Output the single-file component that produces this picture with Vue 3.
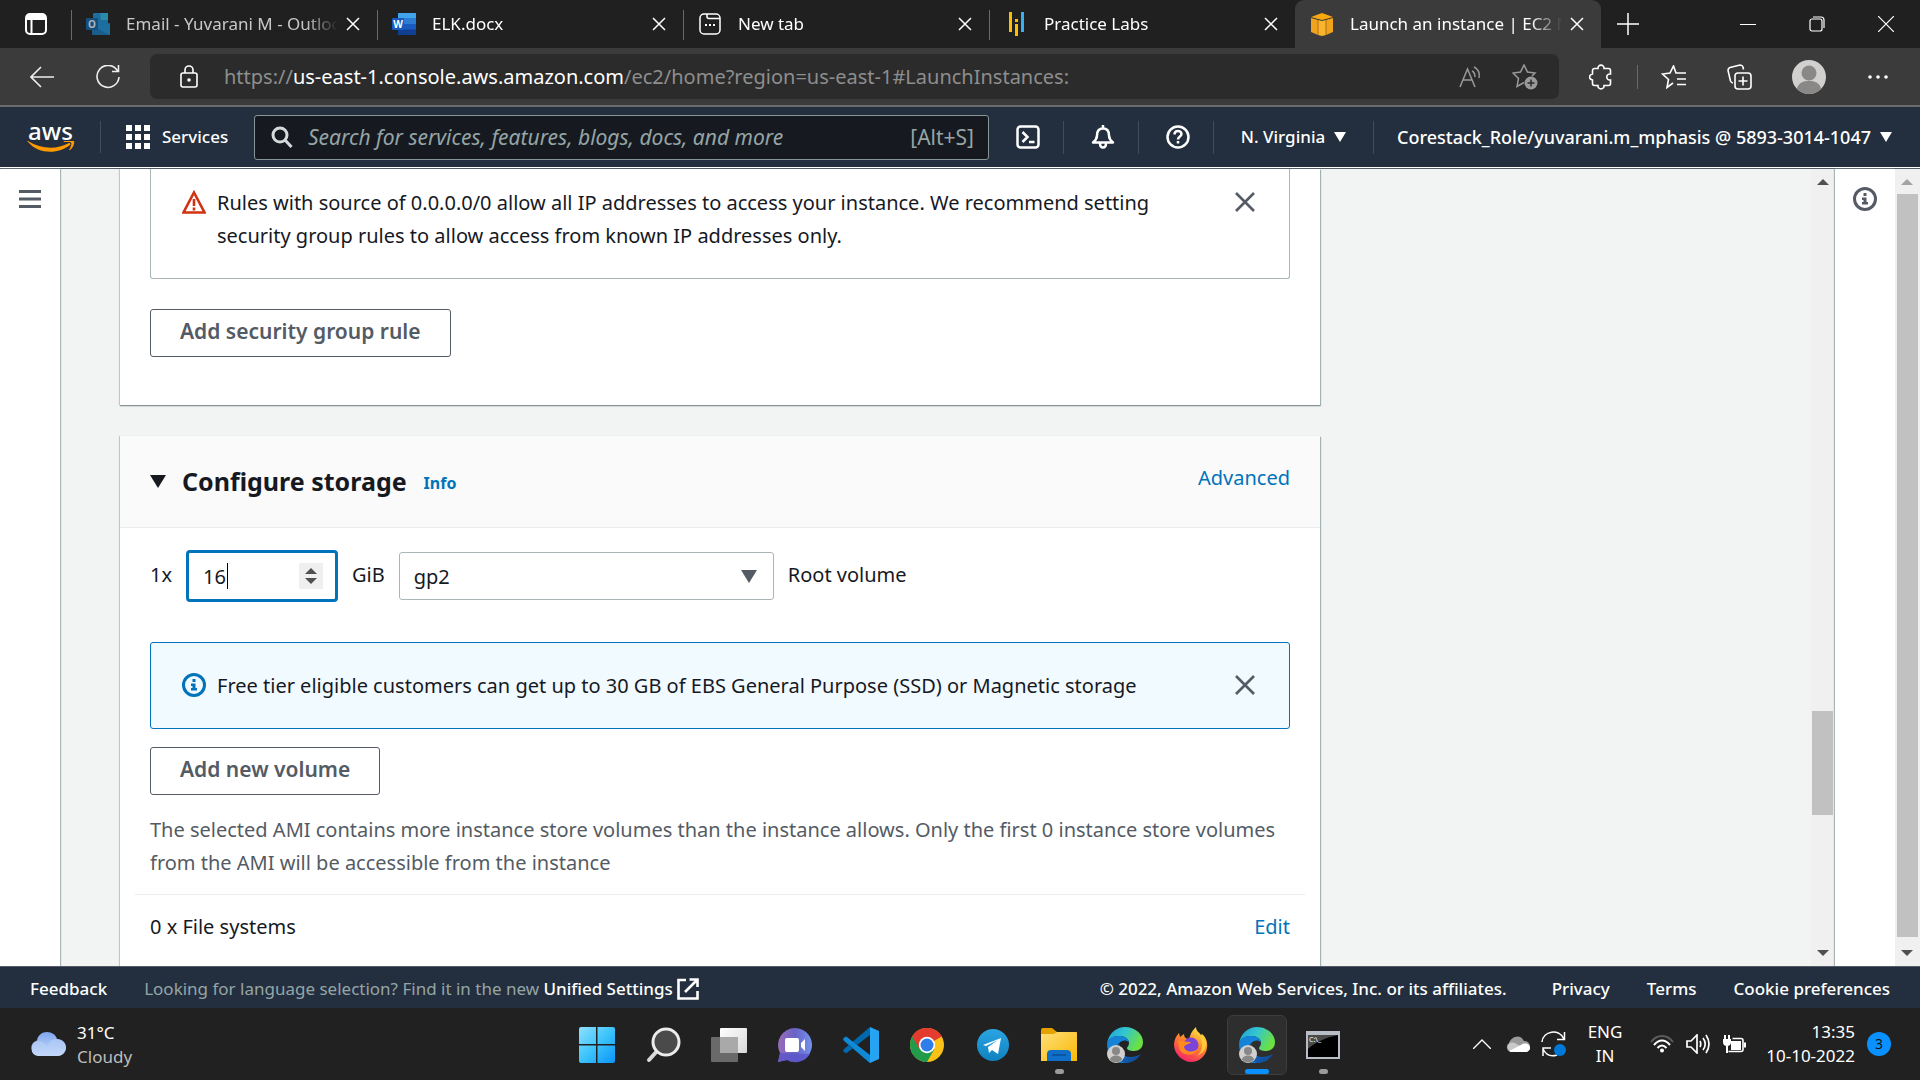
<script setup>
import { ref } from 'vue'

const tabs = [
  { icon: 'outlook', title: 'Email - Yuvarani M - Outlook', dim: true },
  { icon: 'word', title: 'ELK.docx' },
  { icon: 'page', title: 'New tab' },
  { icon: 'labs', title: 'Practice Labs' },
  { icon: 'cube', title: 'Launch an instance | EC2 Management', active: true }
]

const size = ref(16)
const volumeType = ref('gp2')
const search = ref('')
</script>

<template>
  <div class="screen">
    <svg class="defs" width="0" height="0" aria-hidden="true">
      <defs>
        <linearGradient id="win" x1="0" y1="0" x2="1" y2="1"><stop offset="0" stop-color="#8fe0ff" /><stop offset=".5" stop-color="#3cc4fb" /><stop offset="1" stop-color="#0a94fa" /></linearGradient>
        <linearGradient id="cloud" x1="0" y1="0" x2="0" y2="1"><stop offset="0" stop-color="#7ea6ee" /><stop offset="1" stop-color="#cfe0fb" /></linearGradient>
        <linearGradient id="chat" x1="0" y1="0" x2="1" y2="0"><stop offset="0" stop-color="#9a6bb8" /><stop offset=".5" stop-color="#6a62c6" /><stop offset="1" stop-color="#7493ee" /></linearGradient>
        <linearGradient id="tele" x1="0" y1="0" x2="0" y2="1"><stop offset="0" stop-color="#2ba5e2" /><stop offset="1" stop-color="#0f82bf" /></linearGradient>
        <linearGradient id="fold" x1="0" y1="0" x2="1" y2="1"><stop offset="0" stop-color="#ffe07a" /><stop offset="1" stop-color="#fab803" /></linearGradient>
        <linearGradient id="edgeTop" x1="0" y1="0" x2="1" y2=".4"><stop offset="0" stop-color="#1a9fdc" /><stop offset=".5" stop-color="#33c6cf" /><stop offset="1" stop-color="#6be044" /></linearGradient>
        <linearGradient id="edgeLow" x1="0" y1="0" x2="1" y2="1"><stop offset="0" stop-color="#0f7fd6" /><stop offset="1" stop-color="#123f8c" /></linearGradient>
        <linearGradient id="fire" x1=".8" y1="0" x2=".3" y2="1"><stop offset="0" stop-color="#fff04a" /><stop offset=".45" stop-color="#ff8a2a" /><stop offset="1" stop-color="#f5206a" /></linearGradient>
        <linearGradient id="pane" x1="0" y1="0" x2="1" y2="1"><stop offset="0" stop-color="#ffffff" /><stop offset="1" stop-color="#d8d8d8" /></linearGradient>
      </defs>
    </svg>

    <header class="tabbar">
      <button class="tab-actions" aria-label="Tab actions menu">
        <svg width="22" height="22" viewBox="0 0 22 22"><rect x="1" y="1" width="20" height="20" rx="4" fill="none" stroke="#fff" stroke-width="2" /><path d="M1 7V4a3 3 0 0 1 3-3h14a3 3 0 0 1 3 3v3z" fill="#fff" /><path d="M6.500 7v14" stroke="#fff" stroke-width="2" /></svg>
      </button>
      <div v-for="t in tabs" :key="t.title" class="tab" :class="{ active: t.active, dim: t.dim }">
        <svg v-if="t.icon === 'outlook'" class="fav" viewBox="0 0 24 24"><rect x="7" y="1" width="15" height="15" rx="1" fill="#1b6f9f" /><path d="M14.500 1H22v7h-7.500z" fill="#2b8aa8" /><path d="M6 11l9 6 9-6v11a1 1 0 0 1-1 1H7a1 1 0 0 1-1-1z" fill="#1a5c8c" /><path d="M24 11v11a1 1 0 0 1-1 1L9 15z" fill="#1c6f9e" /><rect y="6" width="12" height="12" rx="1" fill="#164f7d" /><text x="6" y="15.500" text-anchor="middle" font-size="10" font-weight="700" fill="#a9b6c2">O</text></svg>
        <svg v-else-if="t.icon === 'word'" class="fav" viewBox="0 0 24 24"><rect x="6" y="1" width="18" height="22" rx="1" fill="#2b7cd3" /><path d="M6 6V2a1 1 0 0 1 1-1h16a1 1 0 0 1 1 1v4z" fill="#41a5ee" /><path d="M6 12h18v6H6z" fill="#185abd" /><path d="M6 17.500h18V22a1 1 0 0 1-1 1H7a1 1 0 0 1-1-1z" fill="#103f91" /><rect y="6" width="12" height="12" rx="1" fill="#185abd" /><text x="6" y="15.500" text-anchor="middle" font-size="10" font-weight="700" fill="#fff">W</text></svg>
        <svg v-else-if="t.icon === 'page'" class="fav" viewBox="0 0 24 24" fill="none" stroke="#fff" stroke-width="1.500"><rect x="2" y="2" width="20" height="20" rx="4" /><path d="M9 2v2.500a2 2 0 0 0 2 2h11" /><path d="M7 13h2M11 13h2M15 13h2" stroke-width="2" /></svg>
        <svg v-else-if="t.icon === 'labs'" class="fav" viewBox="0 0 24 24"><path d="M5 0h3v20H5zM11 15h3v9h-3zM11 7h3v3h-3zM11 12h3v3h-3z" fill="#fbbc04" /><path d="M17 0h3v20h-3z" fill="#35b0f0" /></svg>
        <svg v-else class="fav" viewBox="0 0 24 24"><path d="M1 5l11-4 11 4-11 3z" fill="#f9a90f" /><path d="M1 6l7 2v15l-7-3zM23 6l-7 2v15l7-3z" fill="#f0a31c" /><path d="M8 8l4 1 4-1v15l-4 1-4-1z" fill="#fbb42c" /><path d="M8 8v15M16 8v15" stroke="#a8701a" /></svg>
        <span class="tab-title">{{ t.title }}</span>
        <button class="tab-close" aria-label="Close tab"><svg width="14" height="14" viewBox="0 0 14 14" stroke="#fff" stroke-width="1.500"><path d="M1 1l12 12M13 1L1 13" /></svg></button>
      </div>
      <button class="new-tab" aria-label="New tab"><svg width="22" height="22" viewBox="0 0 22 22" stroke="#fff" stroke-width="1.500"><path d="M11 0v22M0 11h22" /></svg></button>
      <div class="window-buttons">
        <button aria-label="Minimize"><svg width="16" height="16" viewBox="0 0 16 16" stroke="#fff"><path d="M0 8.500h16" /></svg></button>
        <button aria-label="Restore"><svg width="16" height="16" viewBox="0 0 16 16" stroke="#fff" fill="none" stroke-width="1.200"><rect x="1" y="3" width="12" height="12" rx="2" /><path d="M4 1h8a3 3 0 0 1 3 3v8" /></svg></button>
        <button aria-label="Close"><svg width="16" height="16" viewBox="0 0 16 16" stroke="#fff" stroke-width="1.200"><path d="M0 0l16 16M16 0L0 16" /></svg></button>
      </div>
    </header>

    <div class="toolbar">
      <button aria-label="Back"><svg width="24" height="22" viewBox="0 0 24 22" fill="none" stroke="#eee" stroke-width="1.600"><path d="M24 11H1M11 1L1 11l10 10" /></svg></button>
      <button aria-label="Refresh"><svg width="24" height="24" viewBox="0 0 24 24" fill="none" stroke="#eee" stroke-width="1.600"><path d="M21.500 5.800A11 11 0 1 0 23 12M22.500 0v6.500H16" /></svg></button>
      <div class="address">
        <svg width="18" height="24" viewBox="0 0 18 24" fill="none" stroke="#fff" stroke-width="1.600"><rect x="1" y="8" width="16" height="14" rx="2" /><path d="M5 8V5a4 4 0 0 1 8 0v3" /><circle cx="9" cy="15" r="1" fill="#fff" /></svg>
        <div class="url" role="textbox" tabindex="0" aria-label="Address">https://<b>us-east-1.console.aws.amazon.com</b>/ec2/home?region=us-east-1#LaunchInstances:</div>
        <button class="read" aria-label="Read aloud"><svg width="24" height="24" viewBox="0 0 24 24" fill="none" stroke="#9a9a9a" stroke-width="1.500"><path d="M1 22L8.500 4 16 22M4 15h9M13 6c2 1 3 3 3 6M15 2c4 2 6 6 5 11" /></svg></button>
        <button class="fav-add" aria-label="Add to favorites"><svg width="26" height="26" viewBox="0 0 26 26" fill="none" stroke="#9a9a9a" stroke-width="1.500"><path d="M12 18.500l-7 4 1.500-8L1 9l7.500-1L12 1l3.500 7 7.500 1-3 3" /><circle cx="19" cy="19" r="6.500" fill="#9a9a9a" stroke="none" /><path d="M19 15.500v7M15.500 19h7" stroke="#2b2b2b" /></svg></button>
      </div>
      <button class="ext" aria-label="Extensions"><svg width="24" height="26" viewBox="0 0 24 26" fill="none" stroke="#fff" stroke-width="1.600"><path d="M5.500 4.500H9c-.6-4.500 6.600-4.500 6 0h4.500a2 2 0 0 1 2 2V10c-5-.8-5 6.800 0 6v3.500a2 2 0 0 1-2 2H15c.6 4.500-6.600 4.500-6 0H5.500a2 2 0 0 1-2-2V16c-4-1-4-5 0-6V6.500a2 2 0 0 1 2-2z" /></svg></button>
      <span class="tool-sep"></span>
      <button aria-label="Favorites"><svg width="26" height="24" viewBox="0 0 26 24" fill="none" stroke="#fff" stroke-width="1.600"><path d="M12 18l-6 4.500 1.500-8L1.500 9l7.500-1L12.500 1 15 8h10M16 14h9M16 19.500h9" /></svg></button>
      <button aria-label="Collections"><svg width="26" height="26" viewBox="0 0 26 26" fill="none" stroke="#fff" stroke-width="1.600"><path d="M6 19c-1.500 0-2-1-2.500-2L1 6.500c0-1.500.5-2.500 2-3L13 1c1.500 0 2.500.5 3 2l.5 2.500" /><rect x="8" y="9" width="16" height="16" rx="3" /><path d="M16 12.500v9M11.500 17h9" /></svg></button>
      <button class="profile" aria-label="Profile"><svg width="34" height="34" viewBox="0 0 34 34"><circle cx="17" cy="17" r="17" fill="#d2d0ce" /><circle cx="17" cy="13" r="7.500" fill="#8a8886" /><path d="M5 29c1-11 23-11 24 0a17 17 0 0 1-24 0z" fill="#8a8886" /></svg></button>
      <button aria-label="Settings and more"><svg width="22" height="4" viewBox="0 0 22 4" fill="#fff"><circle cx="3" cy="2" r="1.800" /><circle cx="11" cy="2" r="1.800" /><circle cx="19" cy="2" r="1.800" /></svg></button>
    </div>

    <nav class="aws-nav">
      <a href="#" class="logo" aria-label="AWS home"><span>aws</span><svg width="48" height="12" viewBox="0 0 48 12" fill="#ff9900"><path d="M1 0c13 8 28 9 41 2 1 0 2 1 1 2C32 13 12 14 1 1 0 0 0 0 1 0z" /><path d="M37 0c4-1.500 9-1.500 10 0s-1 7-4 9c-1 .5-1 0-.7-.6C44 5 45 2.500 44 1.600c-1-.8-4-.6-6.500-.5-1 0-1.200-.7-.5-1.100z" /></svg></a>
      <button class="services"><svg width="24" height="24" viewBox="0 0 24 24" fill="#fff"><path d="M0 0h6v6H0zM9 0h6v6H9zM18 0h6v6h-6zM0 9h6v6H0zM9 9h6v6H9zM18 9h6v6h-6zM0 18h6v6H0zM9 18h6v6H9zM18 18h6v6h-6z" /></svg>Services</button>
      <label class="search">
        <svg width="22" height="22" viewBox="0 0 22 22" fill="none" stroke="#d5dbdb" stroke-width="3"><circle cx="9" cy="9" r="7" /><path d="M14 14l6.500 7" /></svg>
        <input v-model="search" type="search" aria-label="Search" placeholder="Search for services, features, blogs, docs, and more" />
        <kbd>[Alt+S]</kbd>
      </label>
      <button class="nav-icon" aria-label="CloudShell"><svg width="24" height="24" viewBox="0 0 24 24" fill="none" stroke="#fff" stroke-width="2.500"><rect x="1.500" y="1.500" width="21" height="21" rx="3" /><path d="M6.500 7l5 5-5 5M13 17h5.500" /></svg></button>
      <button class="nav-icon" aria-label="Notifications"><svg width="24" height="24" viewBox="0 0 24 24" fill="none" stroke="#fff" stroke-width="2.500" stroke-linejoin="round"><path d="M12 0v3M2 17.500c3-2.500 4-4 4-7C6 6 8 3.500 12 3.500s6 2.500 6 7c0 3 1 4.500 4 7zM9 18c0 6 6 6 6 0" /></svg></button>
      <button class="nav-icon" aria-label="Help"><svg width="24" height="24" viewBox="0 0 24 24" fill="none" stroke="#fff" stroke-width="2.500"><circle cx="12" cy="12" r="10.500" /><path d="M8.500 9.500c0-5 7-4.500 7-.5 0 2.500-3.500 2.500-3.500 5.500M12 16v2.500" /></svg></button>
      <button class="region">N. Virginia<i class="caret-down"></i></button>
      <button class="account">Corestack_Role/yuvarani.m_mphasis @ 5893-3014-1047<i class="caret-down"></i></button>
    </nav>

    <main class="main">
      <aside class="rail left"><button aria-label="Open navigation"><svg width="22" height="18" viewBox="0 0 22 18" fill="#545b64"><path d="M0 0h22v3H0zM0 7.500h22v3H0zM0 15h22v3H0z" /></svg></button></aside>

      <div class="scroll-area">
        <div class="content">
          <section class="card security">
            <div class="warning">
              <svg class="note-icon" width="24" height="24" viewBox="0 0 24 24"><path d="M12 2.500L22.500 22.500H1.500z" fill="none" stroke="#d13212" stroke-width="2.600" /><path d="M12 9v7M12 17.500v3" stroke="#d13212" stroke-width="2.600" /></svg>
              <p>Rules with source of 0.0.0.0/0 allow all IP addresses to access your instance. We recommend setting security group rules to allow access from known IP addresses only.</p>
              <button class="dismiss" aria-label="Dismiss"><svg width="20" height="20" viewBox="0 0 20 20" stroke="#545b64" stroke-width="2.600"><path d="M1 1l18 18M19 1L1 19" /></svg></button>
            </div>
            <button class="btn">Add security group rule</button>
          </section>

          <section class="card storage">
            <header class="card-head">
              <button class="toggle" aria-label="Collapse"><i class="caret-down big"></i></button>
              <h2>Configure storage</h2>
              <a href="#" class="info">Info</a>
              <a href="#" class="advanced">Advanced</a>
            </header>
            <div class="card-body">
              <div class="volume">
                <label for="size">1x</label>
                <div class="number">
                  <input id="size" v-model="size" type="number" />
                  <span class="text-caret"></span>
                  <span class="spin">
                    <button aria-label="Increase" @click="size++"><i class="tri up"></i></button>
                    <button aria-label="Decrease" @click="size--"><i class="tri"></i></button>
                  </span>
                </div>
                <label for="type">GiB</label>
                <div class="select">
                  <select id="type" v-model="volumeType"><option>gp2</option><option>gp3</option></select>
                  <i class="caret-down big grey"></i>
                </div>
                <span class="role">Root volume</span>
              </div>

              <div class="notice">
                <svg class="note-icon" width="24" height="24" viewBox="0 0 24 24"><circle cx="12" cy="12" r="10.500" fill="none" stroke="#0073bb" stroke-width="3" /><path d="M10.500 6h3v3h-3zM9 10.500h4.500V15H15v2.500H9V15h1.500v-2H9z" fill="#0073bb" /></svg>
                <p>Free tier eligible customers can get up to 30 GB of EBS General Purpose (SSD) or Magnetic storage</p>
                <button class="dismiss" aria-label="Dismiss"><svg width="20" height="20" viewBox="0 0 20 20" stroke="#545b64" stroke-width="2.600"><path d="M1 1l18 18M19 1L1 19" /></svg></button>
              </div>

              <button class="btn">Add new volume</button>
              <p class="hint">The selected AMI contains more instance store volumes than the instance allows. Only the first 0 instance store volumes from the AMI will be accessible from the instance</p>
              <div class="filesystems"><span>0 x File systems</span><a href="#">Edit</a></div>
            </div>
          </section>
        </div>
        <div class="scrollbar inner"><i class="tri up"></i><span class="track"><span class="thumb"></span></span><i class="tri"></i></div>
      </div>

      <aside class="rail right"><button aria-label="Info panel"><svg width="24" height="24" viewBox="0 0 24 24"><circle cx="12" cy="12" r="10.500" fill="none" stroke="#545b64" stroke-width="3" /><path d="M10.500 6h3v3h-3zM9 10.500h4.500V15H15v2.500H9V15h1.500v-2H9z" fill="#545b64" /></svg></button></aside>
      <div class="scrollbar outer"><i class="tri up off"></i><span class="track"><span class="thumb"></span></span><i class="tri"></i></div>
    </main>

    <footer class="footer">
      <a href="#" class="feedback">Feedback</a>
      <span class="lang">Looking for language selection? Find it in the new <a href="#">Unified Settings</a></span>
      <svg class="external" width="22" height="22" viewBox="0 0 22 22" fill="none" stroke="#fff" stroke-width="2.600"><path d="M9 2H1.500v18.500h19V13M12.500 1.500h8V9M20 2L8 14" /></svg>
      <span class="copyright">© 2022, Amazon Web Services, Inc. or its affiliates.</span>
      <a href="#">Privacy</a>
      <a href="#">Terms</a>
      <a href="#">Cookie preferences</a>
    </footer>

    <div class="taskbar">
      <button class="weather">
        <svg width="36" height="24" viewBox="0 0 36 24"><path d="M8 24a8 8 0 0 1-1-15.500C8 3 12 0 17 0s9 3 10 7c5 0 9 4 9 8.500S32 24 28 24z" fill="url(#cloud)" /><path d="M8 24a8 8 0 0 1 0-15c4 0 8 3 9 6 1-5 5-8 10-8 5 0 9 4 9 8.500S32 24 28 24z" fill="#b9d0f7" opacity=".6" /></svg>
        <span>31°C<br /><em>Cloudy</em></span>
      </button>

      <div class="apps">
        <button aria-label="Start"><svg width="36" height="36" viewBox="0 0 36 36" fill="url(#win)"><path d="M2 0H17V17H0V2a2 2 0 0 1 2-2zM18.500 0H34a2 2 0 0 1 2 2V17H18.500zM0 18.500H17V36H2a2 2 0 0 1-2-2zM18.500 18.500H36V34a2 2 0 0 1-2 2H18.500z" /></svg></button>
        <button aria-label="Search"><svg width="36" height="36" viewBox="0 0 36 36"><path d="M4 33l9-10" stroke="#d9d9d9" stroke-width="4" stroke-linecap="round" /><circle cx="21" cy="15" r="13" fill="#4a4a4a" stroke="#ececec" stroke-width="3" /></svg></button>
        <button aria-label="Task view"><svg width="36" height="36" viewBox="0 0 36 36"><rect x="9" y="1" width="27" height="25" rx="1" fill="url(#pane)" /><rect x="0" y="10" width="27" height="25" rx="1" fill="#6a6a6a" /><path d="M9 10h18v16H9z" fill="#a9a9a9" /></svg></button>
        <button aria-label="Chat"><svg width="36" height="36" viewBox="0 0 36 36"><path d="M18 1a17 17 0 1 1-8 32L1 35l2-9A17 17 0 0 1 18 1z" fill="url(#chat)" /><path d="M1 35l2-9 30 1A17 17 0 0 1 10 33z" fill="#5a55cc" opacity=".8" /><rect x="8" y="11" width="14" height="14" rx="2" fill="#fff" /><path d="M24 16l4-4v12l-4-4z" fill="#fff" /></svg></button>
        <button aria-label="Visual Studio Code"><svg width="36" height="36" viewBox="0 0 36 36"><path d="M0 12l3-2.500 24 19V36L1 14z" fill="#0d7fc7" /><path d="M0 24l3 2.500L27 8V0L1 22z" fill="#0069ae" /><path d="M0 12l3-2.500L27 28v8z" fill="#1089d6" /><path d="M27 0l9 4v28l-9 4z" fill="#27a3f3" /></svg></button>
        <button aria-label="Chrome"><svg width="34" height="34" viewBox="0 0 34 34"><circle cx="17" cy="17" r="17" fill="#fbc116" /><path d="M17 17L2.300 8.500A17 17 0 0 1 31.700 8.500z" fill="#e33b2e" /><path d="M2.300 8.500A17 17 0 0 0 17 34l7.500-13H17z" fill="#219a4c" /><path d="M17 9h14.900l-.2-.5A17 17 0 0 0 2.300 8.500L9 20z" fill="#e33b2e" /><circle cx="17" cy="17" r="8.200" fill="#fff" /><circle cx="17" cy="17" r="6.500" fill="#2f7de9" /></svg></button>
        <button aria-label="Telegram"><svg width="32" height="32" viewBox="0 0 32 32"><circle cx="16" cy="16" r="16" fill="url(#tele)" /><path d="M6 16l18-7-3 16-6-4-3 3-1-6 10-7-12 6z" fill="#fff" /></svg></button>
        <button class="open" aria-label="File Explorer"><svg width="36" height="34" viewBox="0 0 36 34"><path d="M0 2a2 2 0 0 1 2-2h9l5 4h18a2 2 0 0 1 2 2v8H0z" fill="#e5a100" /><path d="M0 6h13l3-2h19a1 1 0 0 1 1 1v28H0z" fill="url(#fold)" /><path d="M6 33V26a4 4 0 0 1 4-4h16a4 4 0 0 1 4 4v7z" fill="#0f6fc8" /><path d="M11 27h14" stroke="#0a4d92" stroke-width="1.500" /></svg></button>
        <button v-for="n in 2" :key="n" aria-label="Edge" :class="{ open: n === 2, current: n === 2 }">
          <svg width="36" height="36" viewBox="0 0 36 36"><path d="M0 17C1 7 9 0 18 0c10 0 18 7 18 15 0 6-4 9-9 9-4 0-7-1-7-3 0-1 2-2 2-5 0-4-4-7-10-7S1 12 0 17z" fill="url(#edgeTop)" /><path d="M0 17c1-6 6-8 12-8 5 0 9 2 10 6-5-4-12 0-12 7 0 7 6 13 12 14C8 38 0 29 0 17z" fill="#1583d8" /><path d="M13 17c-3 8 3 13 10 13 4 0 8-1 11-3-4 6-9 9-16 9C9 34 8 22 13 17z" fill="url(#edgeLow)" /><circle cx="9" cy="27" r="9" fill="#d2d0ce" /><circle cx="9" cy="24" r="4" fill="#8a8886" /><path d="M3 33c0-6 12-6 12 0a9 9 0 0 1-12 0z" fill="#8a8886" /></svg>
        </button>
        <button aria-label="Firefox" class="second"><svg width="36" height="36" viewBox="0 0 36 36"><path d="M1 18c0-5 2-9 5-12l1 4 4-3c0 3 2 5 5 5 2-6 3-8 7-12 0 4 3 5 5 8l1-1c4 3 6 9 5 14-1 8-8 14-16 14S1 27 1 18z" fill="url(#fire)" /><circle cx="18" cy="18" r="7.500" fill="#7a45d8" /><path d="M5 14c4-1 7 1 13 1-2 3-6 2-7 5 1 5 9 6 14 2-2 7-16 8-19-1z" fill="#ff8a1f" /><path d="M22 1c0 4 7 8 7 18 0 4-2 8-6 10 7-2 11-8 10-14 0-3-2-6-4-7l-1 1c-2-3-5-4-6-8z" fill="#ffc93a" /></svg></button>
        <button class="open third" aria-label="Command Prompt"><svg width="34" height="28" viewBox="0 0 34 28"><rect width="34" height="28" fill="#b9bec6" /><rect x="2" y="4" width="30" height="22" fill="#000" /><path d="M2 4h30C18 7 8 12 2 18z" fill="#4a4a4a" /><text x="3" y="11" font-size="7" fill="#fff">C:\_</text></svg></button>
      </div>

      <div class="tray">
        <button class="cell" aria-label="Show hidden icons"><svg width="18" height="10" viewBox="0 0 18 10" fill="none" stroke="#fff" stroke-width="1.400"><path d="M0 10l9-9 9 9" /></svg></button>
        <button class="cell" aria-label="OneDrive"><svg width="24" height="16" viewBox="0 0 24 16"><path d="M5 16a5 5 0 0 1-2-9C5 1 14-3 18 5c8 0 8 11 1 11z" fill="#9a9a9a" /><path d="M5 16a5 5 0 0 1-1-9c3-1 6 0 8 2l12 2c0 3-2 5-5 5z" fill="#c9c9c9" /><path d="M3 15l12-6c4-3 9-1 9 3 0 2-2 4-5 4H5z" fill="#fff" /></svg></button>
        <button class="cell" aria-label="Sync"><svg width="26" height="26" viewBox="0 0 26 26" fill="none" stroke="#fff" stroke-width="1.500"><path d="M1 11C2 0 18-3 23 8M23.500 1v7.500H16M2 25v-8h8M2 18c3 6 8 8 14 6" /><circle cx="19" cy="19" r="6" fill="#0078d7" stroke="none" /></svg></button>
        <button class="language">ENG<br />IN</button>
        <button class="cell" aria-label="Wi-Fi"><svg width="24" height="18" viewBox="0 0 24 18" fill="none" stroke-width="2"><path d="M1 7C7-1 17-1 23 7" stroke="#5c5c5c" /><path d="M4 10c5-6 11-6 16 0M7.500 13c3-3.500 6-3.500 9 0" stroke="#fff" /><circle cx="12" cy="15.500" r="2" fill="#fff" /></svg></button>
        <button class="cell" aria-label="Volume"><svg width="24" height="20" viewBox="0 0 24 20" fill="none" stroke="#fff" stroke-width="1.700"><path d="M1 7h4l6-6v18l-6-6H1zM14 7c1 2 1 4 0 6M17 4c3 4 3 8 0 12M20 1c4 6 4 12 0 18" /></svg></button>
        <button class="cell" aria-label="Battery"><svg width="24" height="20" viewBox="0 0 24 20"><path d="M1 5h8v3a4 4 0 0 1-8 0zM2 1h2v4H2zM6 1h2v4H6zM4 11h2v8H4z" fill="#fff" /><rect x="9" y="7" width="10" height="9" fill="#fff" /><path d="M10.500 4.500H19a2 2 0 0 1 2 2v9a2 2 0 0 1-2 2H6.500" fill="none" stroke="#fff" stroke-width="1.600" /><path d="M22 8.500h2v5h-2z" fill="#fff" /></svg></button>
        <button class="clock">13:35<br />10-10-2022</button>
        <span class="badge">3</span>
      </div>
    </div>
  </div>
</template>

<style>
body {
  margin: 0;
  overflow: hidden;
}
</style>

<style scoped>
* {
  box-sizing: border-box;
}
.screen {
  display: flex;
  flex-direction: column;
  height: 100vh;
  overflow: hidden;
  font-family: "Noto Sans", "Open Sans", sans-serif;
  font-size: 20px;
  line-height: 33px;
  color: #16191f;
  background: #202020;
}
.defs {
  position: absolute;
}
button {
  display: flex;
  align-items: center;
  justify-content: center;
  margin: 0;
  padding: 0;
  border: 0;
  background: none;
  color: inherit;
  font: inherit;
  white-space: nowrap;
}
svg {
  flex: none;
}
a {
  color: #0073bb;
  text-decoration: none;
}
p {
  margin: 0;
}

/* browser tabs */
.tabbar {
  display: flex;
  height: 48px;
  color: #fff;
  font-size: 17px;
  line-height: 24px;
}
.tab-actions {
  width: 71px;
}
.tab {
  display: flex;
  align-items: center;
  flex: 0 1 306px;
  min-width: 0;
  padding: 0 17px 0 15px;
  background: linear-gradient(#6a6a6a, #6a6a6a) 0 10px / 1px 30px no-repeat;
}
.tab.active {
  background: #3b3b3b;
  border-radius: 9px 9px 0 0;
}
.tab.dim .tab-title {
  color: #c8c8c8;
}
.fav {
  width: 24px;
  height: 24px;
}
.tab-title {
  flex: 1;
  margin: 0 8px 0 16px;
  overflow: hidden;
  white-space: nowrap;
  mask-image: linear-gradient(90deg, #000 85%, transparent);
}
.new-tab {
  width: 54px;
}
.window-buttons {
  display: flex;
  margin-left: auto;
}
.window-buttons button {
  width: 69px;
}

/* browser toolbar */
.toolbar {
  display: flex;
  align-items: center;
  height: 59px;
  padding: 0 9px;
  background: #3b3b3b;
  border-bottom: 2px solid #6b6b6b;
}
.toolbar > button {
  width: 66px;
  height: 45px;
}
.toolbar > .profile {
  width: 72px;
}
.address {
  display: flex;
  align-items: center;
  flex: 1;
  min-width: 0;
  height: 45px;
  margin: 0 9px;
  padding: 0 21px 0 30px;
  background: #2b2b2b;
  border-radius: 7px;
}
.url {
  flex: 1;
  min-width: 0;
  margin-left: 26px;
  overflow: hidden;
  color: #8e8e8e;
  white-space: nowrap;
}
.url b {
  color: #fff;
  font-weight: 400;
}
.fav-add {
  margin-left: 29px;
}
.tool-sep {
  width: 1px;
  height: 24px;
  margin: 0 3px;
  background: #6a6a6a;
}

/* console navigation */
.aws-nav {
  display: flex;
  align-items: center;
  height: 61px;
  flex: none;
  background: #232f3e;
  border-bottom: 1px solid #fff;
  color: #fff;
  font-size: 17px;
  font-weight: 500;
  line-height: 24px;
}
.logo {
  display: flex;
  flex-direction: column;
  align-items: center;
  width: 101px;
  padding: 0 26px;
  color: #fff;
  font-size: 24px;
  font-weight: 500;
  line-height: 20px;
  background: linear-gradient(#414c5a, #414c5a) 100% 50% / 1px 33px no-repeat;
}
.services {
  width: 153px;
  gap: 12px;
  justify-content: flex-start;
  padding-left: 25px;
}
.search {
  display: flex;
  align-items: center;
  flex: 0 1 735px;
  height: 45px;
  padding: 0 14px 0 16px;
  background: #161a20;
  border: 1px solid #879596;
  border-radius: 3px;
  color: #95a5a6;
  font-size: 21px;
}
.search input {
  flex: 1;
  min-width: 0;
  margin-left: 15px;
  padding: 0;
  border: 0;
  outline: 0;
  background: none;
  color: #fff;
  font: italic 400 21px "Noto Sans", sans-serif;
}
.search input::placeholder {
  color: #95a5a6;
}
.search kbd {
  font: inherit;
  font-weight: 400;
}
.nav-icon {
  width: 75px;
  height: 33px;
  padding-left: 3px;
  border-right: 1px solid #414c5a;
}
.region {
  width: 160px;
  height: 33px;
  gap: 9px;
  border-right: 1px solid #414c5a;
}
.account {
  flex: 1;
  gap: 9px;
  justify-content: flex-end;
  padding-right: 28px;
  font-size: 18px;
}
.caret-down {
  width: 0;
  height: 0;
  border: 6px solid transparent;
  border-top: 10px solid #fff;
  border-bottom: 0;
}
.caret-down.big {
  border-width: 13px 8px 0;
  border-top-color: #16191f;
}
.caret-down.grey {
  border-top-color: #545b64;
}

/* page */
.main {
  display: flex;
  flex: 1;
  min-height: 0;
  border-top: 1px solid #545b64;
  background: #f2f3f3;
}
.rail {
  width: 60px;
  flex: none;
  padding-top: 21px;
  background: #fff;
}
.rail button {
  width: 60px;
}
.rail.left {
  box-shadow: 1px 0 1px #aab7b8;
}
.rail.right {
  padding-top: 18px;
  box-shadow: -1px 0 1px #aab7b8;
}
.scroll-area {
  display: flex;
  flex: 1;
  min-width: 0;
  overflow: hidden;
  margin-left: 1px;
}
.content {
  flex: 1;
  min-width: 0;
  padding: 0 491px 0 59px;
}
.card {
  background: #fff;
  box-shadow: 0 1px 1px #879596, 1px 1px 1px #aab7b8, -1px 0 1px #ccd2d2;
}
.security {
  padding: 0 30px 48px;
}
.warning,
.notice {
  display: flex;
  padding: 17px 34px 26px 31px;
  border: 1px solid #aab7b8;
  border-radius: 0 0 3px 3px;
}
.warning {
  border-top: 0;
  margin-bottom: 30px;
}
.notice {
  margin-bottom: 18px;
  padding-top: 26px;
  background: #f1faff;
  border-color: #0073bb;
  border-radius: 3px;
}
.note-icon {
  margin: 4px 11px 0 0;
}
.warning p,
.notice p {
  flex: 1;
  padding-right: 60px;
}
.dismiss {
  width: 20px;
  height: 31px;
}
.btn {
  height: 48px;
  padding: 0 29px 3px;
  border: 1px solid #545b64;
  border-radius: 3px;
  color: #545b64;
  font-size: 21px;
  font-weight: 600;
}
.storage {
  margin-top: 31px;
  height: 600px;
}
.card-head {
  display: flex;
  align-items: center;
  height: 92px;
  padding: 0 30px;
  background: #fafafa;
  border-bottom: 1px solid #eaeded;
}
h2 {
  margin: 0 17px 0 16px;
  font-size: 25px;
  font-weight: 700;
}
.info {
  padding-top: 3px;
  font-size: 16px;
  font-weight: 700;
}
.advanced {
  margin-left: auto;
  padding-bottom: 8px;
}
.card-body {
  padding: 22px 30px 0;
}
.volume {
  display: flex;
  align-items: center;
  gap: 14px;
  margin-bottom: 40px;
}
.volume label,
.role {
  padding-bottom: 4px;
}
.number {
  position: relative;
  display: flex;
  align-items: center;
  width: 152px;
  height: 52px;
  padding: 0 12px 0 14px;
  border: 3px solid #0073bb;
  border-radius: 4px;
}
.number input {
  flex: 1;
  min-width: 0;
  padding: 0;
  border: 0;
  outline: 0;
  font: inherit;
  color: inherit;
  appearance: textfield;
}
.number input::-webkit-inner-spin-button {
  display: none;
}
.text-caret {
  position: absolute;
  left: 38px;
  top: 10px;
  width: 1px;
  height: 26px;
  background: #000;
}
.spin {
  display: flex;
  flex-direction: column;
  justify-content: space-evenly;
  width: 24px;
  height: 26px;
  background: #efefef;
}
.tri {
  width: 0;
  height: 0;
  border: 6px solid transparent;
  border-top-color: #505050;
  border-bottom: 0;
}
.tri.up {
  border: 6px solid transparent;
  border-bottom-color: #505050;
  border-top: 0;
}
.tri.up.off {
  border-bottom-color: #a3a3a3;
}
.select {
  position: relative;
  display: flex;
  align-items: center;
  width: 375px;
}
.select select {
  width: 100%;
  height: 48px;
  padding: 0 14px;
  border: 1px solid #aab7b8;
  border-radius: 3px;
  background: #fff;
  color: inherit;
  font: inherit;
  appearance: none;
}
.select i {
  position: absolute;
  right: 17px;
}
.hint {
  margin: 18px 0 15px;
  color: #545b64;
}
.filesystems {
  display: flex;
  justify-content: space-between;
  margin: 0 -15px;
  padding: 15px 15px 0;
  border-top: 1px solid #eaeded;
}

/* scrollbars */
.scrollbar {
  display: flex;
  flex-direction: column;
  align-items: center;
  width: 24px;
  flex: none;
  padding: 10px 1px 10px 0;
  background: #f0f0f0;
}
.scrollbar.outer {
  width: 25px;
}
.track {
  display: flex;
  flex-direction: column;
  flex: 1;
  width: 21px;
  margin: 9px 0 13px;
}
.thumb {
  flex: 1;
  background: #c1c1c1;
}
.inner .track {
  padding: 517px 0 122px;
}

/* console footer */
.footer {
  display: flex;
  align-items: center;
  gap: 37px;
  height: 42px;
  flex: none;
  padding: 2px 30px 0;
  background: #232f3e;
  border-top: 1px solid #545b64;
  color: #fff;
  font-size: 17px;
  font-weight: 500;
}
.footer a {
  color: #fff;
}
.lang {
  color: #95a5a6;
  font-weight: 400;
}
.lang a {
  font-weight: 500;
}
.external {
  margin-left: -33px;
}
.copyright {
  margin-left: auto;
  margin-right: 8px;
}

/* taskbar */
.taskbar {
  display: grid;
  grid-template-columns: 1fr auto 1fr;
  height: 72px;
  flex: none;
  background: #212121;
  color: #fff;
  font-size: 17px;
  line-height: 24px;
}
.weather {
  gap: 11px;
  justify-self: start;
  padding-left: 30px;
  text-align: left;
}
.weather span {
  padding-top: 2px;
}
.weather em {
  color: #bdbdbd;
  font-style: normal;
}
.apps {
  display: flex;
  align-items: center;
}
.apps button {
  position: relative;
  width: 60px;
  height: 60px;
  margin: 2px 3px 0;
  border-radius: 6px;
}
.apps .second {
  order: 1;
}
.apps .current {
  order: 2;
  background: #2e2e2e;
  border: 1px solid #3d3d3d;
}
.apps .third {
  order: 3;
}
.apps .open::after {
  content: "";
  position: absolute;
  bottom: 1px;
  left: 50%;
  width: 9px;
  height: 5px;
  margin-left: -4px;
  border-radius: 3px;
  background: #9a9a9a;
}
.apps .current::after {
  bottom: 0;
  width: 24px;
  margin-left: -12px;
  background: #0a91ff;
}
.tray {
  display: flex;
  align-items: center;
  justify-content: flex-end;
  padding-right: 29px;
}
.cell {
  width: 36px;
}
.language {
  width: 66px;
  margin-right: 6px;
}
.clock {
  width: 103px;
  margin-right: 12px;
  justify-content: flex-end;
  text-align: right;
}
.badge {
  width: 24px;
  height: 24px;
  border-radius: 50%;
  background: #0a91ff;
  color: #111;
  font-size: 14px;
  text-align: center;
}
</style>
